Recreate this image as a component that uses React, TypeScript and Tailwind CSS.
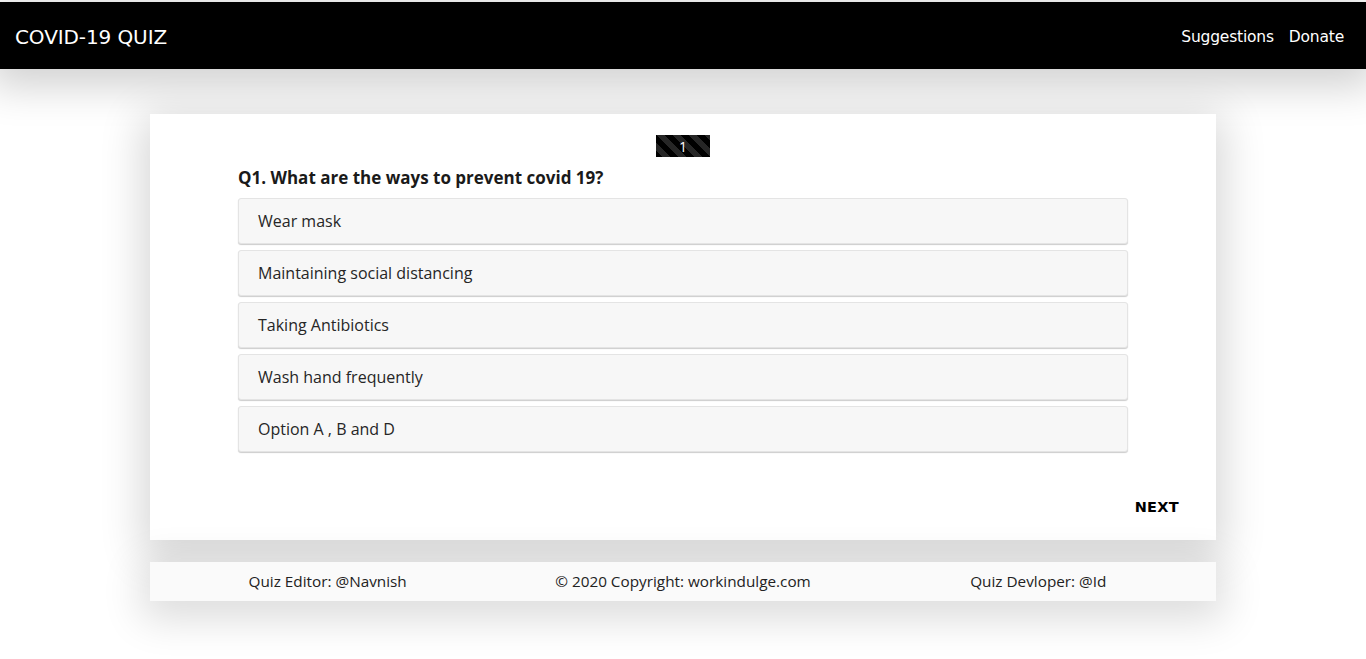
const options = [
  "Wear mask",
  "Maintaining social distancing",
  "Taking Antibiotics",
  "Wash hand frequently",
  "Option A , B and D",
];

const footerCols = [
  "Quiz Editor: @Navnish",
  "© 2020 Copyright: workindulge.com",
  "Quiz Devloper: @Id",
];

export default function App() {
  return (
    <div className="min-h-[659px] bg-white pt-[2px] font-['Open_Sans',sans-serif] text-[#212529]">
      <header className="flex h-[67px] items-center justify-between bg-black px-[15px] text-white shadow-[0_8px_40px_10px_rgba(0,0,0,0.18)] font-['DejaVu_Sans',Verdana,sans-serif]">
        <span className="pt-[2px] text-[20px] tracking-[-0.1px]">COVID-19 QUIZ</span>
        <nav className="flex gap-[15px] pt-[5px] pr-[7px] text-[15.5px] tracking-[-0.2px]">
          <a>Suggestions</a>
          <a>Donate</a>
        </nav>
      </header>

      <main className="mx-auto mt-[45px] w-[1066px]">
        <section className="bg-white pt-[21px] pb-[21px] shadow-[0_10px_40px_8px_rgba(0,0,0,0.16)]">
          <div className="flex justify-center">
            <span className="flex h-[22px] w-[54px] items-center justify-center bg-black bg-[linear-gradient(45deg,rgba(255,255,255,0.15)_25%,transparent_25%,transparent_50%,rgba(255,255,255,0.15)_50%,rgba(255,255,255,0.15)_75%,transparent_75%,transparent)] bg-[length:16px_16px] text-[14px] text-white">
              1
            </span>
          </div>
          <div className="mx-[88px] mt-[9px]">
            <h2 className="text-[17px] font-bold leading-[24px] text-[#1a1a1a]">
              Q1. What are the ways to prevent covid 19?
            </h2>
            <ul className="mt-[8px] flex flex-col gap-[6px]">
              {options.map((o) => (
                <li
                  key={o}
                  className="flex h-[46px] items-center rounded-[3px] border border-[#e4e4e4] bg-[#f7f7f7] px-[19px] text-[16px] text-[#262626] shadow-[0_1px_1px_rgba(0,0,0,0.2)]"
                >
                  {o}
                </li>
              ))}
            </ul>
          </div>
          <div className="mt-[45px] flex justify-end pr-[37px]">
            <button className="text-[14.5px] font-bold tracking-[0.3px] text-black font-['DejaVu_Sans',Verdana,sans-serif]">
              NEXT
            </button>
          </div>
        </section>

        <footer className="mt-[22px] grid h-[39px] grid-cols-3 items-center bg-[#fafafa] text-[15.3px] text-[#222] shadow-[0_10px_40px_8px_rgba(0,0,0,0.14)]">
          {footerCols.map((c) => (
            <span key={c} className="text-center">
              {c}
            </span>
          ))}
        </footer>
      </main>
    </div>
  );
}
